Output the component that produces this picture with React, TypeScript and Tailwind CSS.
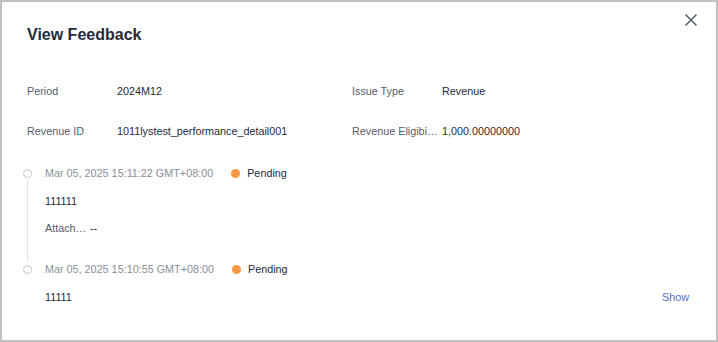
import React from 'react';

const fields = [
  [
    { label: 'Period', value: '2024M12' },
    { label: 'Issue Type', value: 'Revenue' },
  ],
  [
    { label: 'Revenue ID', value: '1011lystest_performance_detail001' },
    { label: 'Revenue Eligibility Amount', value: '1,000.00000000' },
  ],
];

const records = [
  { time: 'Mar 05, 2025 15:11:22 GMT+08:00', status: 'Pending', text: '111111', attach: true },
  { time: 'Mar 05, 2025 15:10:55 GMT+08:00', status: 'Pending', text: '11111', attach: false },
];

const App = () => {
  return (
    <div
      className="w-[718px] h-[342px] bg-white border-2 border-[#c0c0c0] pl-[25px] pr-[27px] text-[10.8px] leading-[18px] text-[#252b3a]"
      style={{ fontFamily: '"Liberation Sans", Arial, sans-serif' }}
    >
      {/* header */}
      <div className="flex items-start justify-between">
        <h2 className="pt-[21px] text-[16px] leading-[24px] font-bold text-[#252b3a]">View Feedback</h2>
        <button className="mt-[11px] mr-[-9px] text-[#575d6c]">
          <svg width="14" height="14" viewBox="0 0 14 14" fill="none" stroke="currentColor" strokeWidth="1.5">
            <path d="M1.5 1.5l11 11M12.5 1.5l-11 11" />
          </svg>
        </button>
      </div>

      {/* detail fields */}
      <div className="mt-[35px] flex flex-col gap-[22px]">
        {fields.map((row, i) => (
          <div key={i} className="grid grid-cols-[325px_1fr]">
            {row.map((f) => (
              <div key={f.label} className="flex">
                <span className="w-[90px] shrink-0 pr-[4px] truncate text-[#575d6c]">{f.label}</span>
                <span>{f.value}</span>
              </div>
            ))}
          </div>
        ))}
      </div>

      {/* timeline */}
      <div className="mt-[24px] ml-[-5px]">
        {records.map((r, i) => {
          const last = i === records.length - 1;
          return (
            <div key={i} className="flex gap-[13px]">
              <div className="w-[10px] flex flex-col items-center shrink-0">
                <div className="mt-[5px] w-[9px] h-[9px] rounded-full border border-[#c2c6cf] bg-white" />
                {!last && <div className="w-px flex-1 mt-[2px] mb-[-2px] bg-[#dfe1e6]" />}
              </div>
              <div className={`flex-1 ${last ? '' : 'pb-[23px]'}`}>
                <div className="flex items-center">
                  <span className="text-[#8a8e99]">{r.time}</span>
                  <span className="ml-[18px] w-[9px] h-[9px] rounded-full bg-[#fa9841]" />
                  <span className="ml-[7px]">{r.status}</span>
                </div>
                <div className="mt-[10px] flex justify-between">
                  <span>{r.text}</span>
                  {last && <a className="text-[#526ecc] cursor-pointer">Show</a>}
                </div>
                {r.attach && (
                  <div className="mt-[9px] flex">
                    <span className="w-[44px] truncate text-[#575d6c]">Attachment</span>
                    <span className="ml-[1px]">--</span>
                  </div>
                )}
              </div>
            </div>
          );
        })}
      </div>
    </div>
  );
};

export default App;
